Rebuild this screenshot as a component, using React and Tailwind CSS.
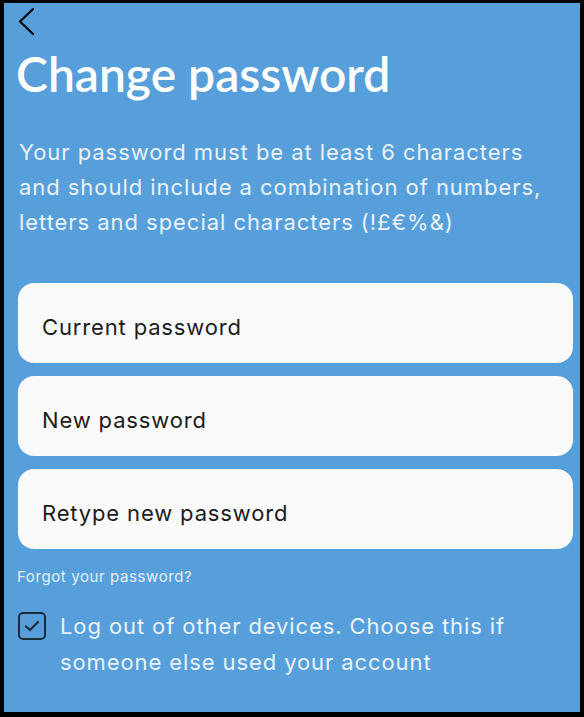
import { useState } from "react";

const inter = { fontFamily: "Inter, 'Noto Sans', sans-serif" };

function Field({ label }) {
  return (
    <div className="h-[80px] rounded-[16px] bg-[#fafafa] flex items-center pl-[24px] pt-[8px] text-[22px] tracking-[0.85px] text-[#1c1c1c]">
      {label}
    </div>
  );
}

export default function App() {
  const [logout, setLogout] = useState(true);

  return (
    <div className="w-[584px] h-[717px] bg-black pt-[3px] pl-[4px] pr-[4px] pb-[5px]">
      <div className="w-full h-full bg-[#569fdb] overflow-hidden" style={inter}>
        {/* Back */}
        <button className="block ml-[13px] mt-[3px] h-[30px] text-black">
          <svg width="22" height="30" viewBox="0 0 22 30" fill="none" stroke="currentColor" strokeWidth="2.2" strokeLinecap="round" strokeLinejoin="round">
            <path d="M16 3 L3 15.5 L16 28" />
          </svg>
        </button>

        <h1
          className="ml-[12px] mt-[12px] text-[48px] leading-[52px] font-semibold text-white"
          style={{ fontFamily: "Lato, sans-serif" }}
        >
          Change password
        </h1>

        <p className="ml-[15px] w-[540px] mt-[35px] text-[22px] leading-[35px] tracking-[0.95px] text-[#eaf2fa]">
          Your password must be at least 6 characters and should include a combination of numbers, letters and special characters (!£€%&amp;)
        </p>

        <div className="ml-[14px] mr-[7px] mt-[43px] flex flex-col gap-[13px]">
          <Field label="Current password" />
          <Field label="New password" />
          <Field label="Retype new password" />
        </div>

        <a className="block ml-[13px] mt-[18px] text-[15px] leading-[20px] tracking-[0.6px] text-[#e6eff9]">
          Forgot your password?
        </a>

        <label className="flex items-start gap-[14px] ml-[14px] mt-[21px] mr-[20px] cursor-pointer">
          <span
            onClick={() => setLogout(!logout)}
            className="mt-[4px] w-[28px] h-[28px] shrink-0 rounded-[5px] border-2 border-[#1c2a3a] flex items-center justify-center"
          >
            {logout && (
              <svg width="16" height="14" viewBox="0 0 16 14" fill="none" stroke="#1c2a3a" strokeWidth="2.2" strokeLinecap="round" strokeLinejoin="round">
                <path d="M2 7.5 L6 11 L14 3" />
              </svg>
            )}
          </span>
          <span className="text-[22px] leading-[36px] tracking-[0.9px] text-[#eaf2fa]">
            Log out of other devices. Choose this if someone else used your account
          </span>
        </label>
      </div>
    </div>
  );
}
